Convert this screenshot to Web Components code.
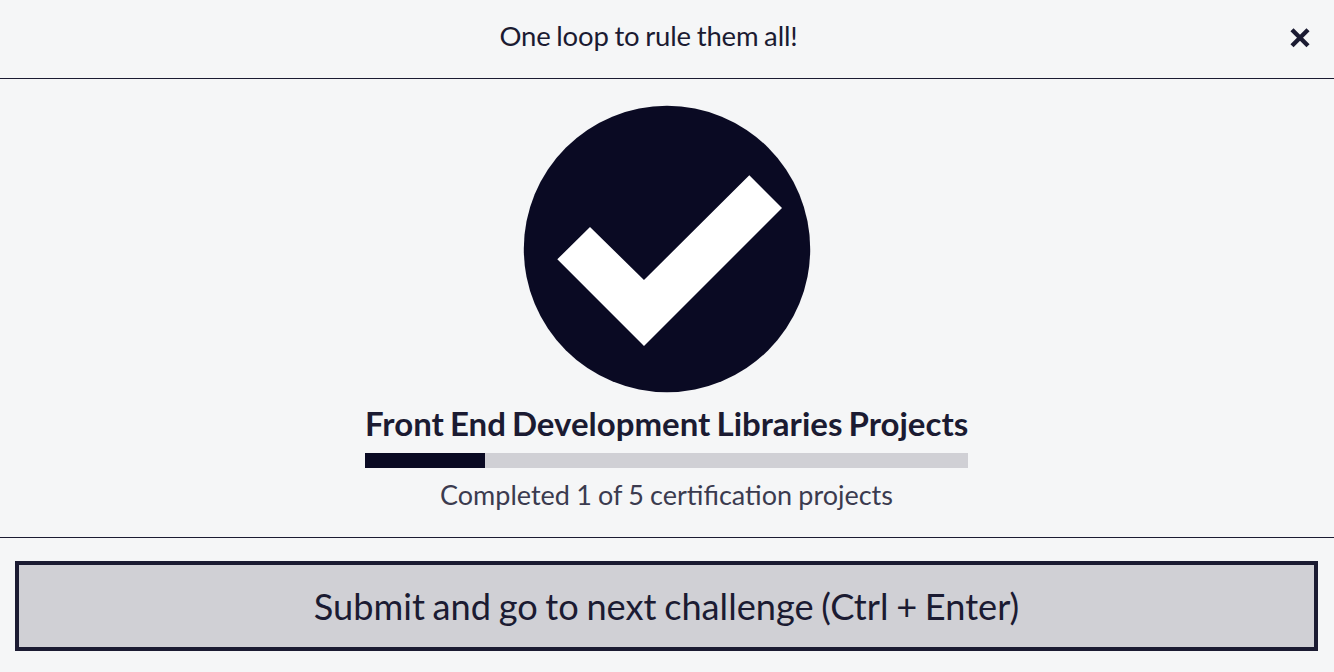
<!DOCTYPE html>
<html lang="en">
<head>
<meta charset="utf-8">
<title>Challenge completed</title>
<style>
  html, body { margin: 0; height: 100%; }
  body {
    background: #f5f6f7;
    color: #1b1b32;
    font-family: Lato, "Liberation Sans", sans-serif;
  }
</style>
</head>
<body>
<completion-modal heading="One loop to rule them all!">
  <completion-badge></completion-badge>
  <block-progress title-text="Front End Development Libraries Projects" percent="19.9">Completed 1 of 5 certification projects</block-progress>
  <submit-button slot="footer">Submit and go to next challenge (Ctrl + Enter)</submit-button>
</completion-modal>

<script>
const html = String.raw
const css = String.raw

class CompletionModal extends HTMLElement {
  constructor() {
    super()
    const root = this.attachShadow({ mode: 'open' })
    root.innerHTML = html`
      <style>${css`
        :host {
          display: flex;
          flex-direction: column;
          height: 672px;
          overflow: hidden;
        }
        header {
          box-sizing: border-box;
          height: 79px;
          flex: none;
          display: flex;
          align-items: center;
          justify-content: center;
          padding: 0 37px 6px 0;
          border-bottom: 1px solid #1b1b32;
          position: relative;
        }
        h2 {
          margin: 0;
          font-size: 27.5px;
          font-weight: 400;
          line-height: 36px;
          letter-spacing: -0.15px;
          word-spacing: -1.2px;
        }
        button {
          position: absolute;
          top: 25px;
          right: 23px;
          width: 22px;
          height: 26px;
          padding: 0;
          border: 0;
          background: none;
          color: #1b1b32;
        }
        svg { display: block; }
        main {
          box-sizing: border-box;
          height: 459px;
          flex: none;
          display: flex;
          flex-direction: column;
          align-items: center;
          padding-top: 26px;
          border-bottom: 1px solid #1b1b32;
        }
        footer {
          flex: 1;
          padding: 23px 16px 0 15px;
        }
      `}</style>
      <header>
        <h2></h2>
        <button aria-label="Close">
          <svg width="22" height="26" viewBox="0 0 22 26">
            <path d="M3 4.8 L19 20.8 M19 4.8 L3 20.8" stroke="currentColor" stroke-width="4.4" fill="none"/>
          </svg>
        </button>
      </header>
      <main><slot></slot></main>
      <footer><slot name="footer"></slot></footer>
    `
    root.querySelector('h2').textContent = this.getAttribute('heading')
  }
}

class CompletionBadge extends HTMLElement {
  constructor() {
    super()
    const root = this.attachShadow({ mode: 'open' })
    root.innerHTML = html`
      <style>${css`
        :host { display: block; width: 288px; height: 288px; }
        svg { display: block; }
      `}</style>
      <svg width="288" height="288" viewBox="0 0 288 288">
        <circle cx="144" cy="144" r="143.2" fill="#0a0a23"/>
        <polygon fill="#fff" points="226.3,70.3 259,103 121,241 34.3,154.3 67,122 121,175"/>
      </svg>
    `
  }
}

class BlockProgress extends HTMLElement {
  constructor() {
    super()
    const root = this.attachShadow({ mode: 'open' })
    root.innerHTML = html`
      <style>${css`
        :host {
          display: flex;
          flex-direction: column;
          align-items: stretch;
          width: 603px;
          margin-right: 1px;
        }
        h3 {
          margin: 10px 0 0;
          font-size: 33px;
          font-weight: 700;
          line-height: 41px;
          word-spacing: -1.9px;
          white-space: nowrap;
        }
        .track {
          height: 15px;
          margin-top: 9px;
          background: #d0d0d5;
        }
        .fill {
          height: 100%;
          background: #0a0a23;
        }
        p {
          margin: 10px 0 0;
          text-align: center;
          font-size: 27px;
          line-height: 34px;
          word-spacing: -0.7px;
          color: #3b3b4f;
        }
      `}</style>
      <h3></h3>
      <div class="track"><div class="fill"></div></div>
      <p><slot></slot></p>
    `
    root.querySelector('h3').textContent = this.getAttribute('title-text')
    root.querySelector('.fill').style.width = this.getAttribute('percent') + '%'
  }
}

class SubmitButton extends HTMLElement {
  constructor() {
    super()
    const root = this.attachShadow({ mode: 'open' })
    root.innerHTML = html`
      <style>${css`
        :host { display: block; }
        button {
          box-sizing: border-box;
          display: block;
          width: 100%;
          height: 90px;
          padding: 0;
          border: 4px solid #1b1b32;
          border-radius: 0;
          background: #d0d0d5;
          color: #1b1b32;
          font: 400 36.2px Lato, "Liberation Sans", sans-serif;
          word-spacing: -1.6px;
        }
      `}</style>
      <button type="button"><slot></slot></button>
    `
  }
}

customElements.define('completion-modal', CompletionModal)
customElements.define('completion-badge', CompletionBadge)
customElements.define('block-progress', BlockProgress)
customElements.define('submit-button', SubmitButton)
</script>
</body>
</html>
